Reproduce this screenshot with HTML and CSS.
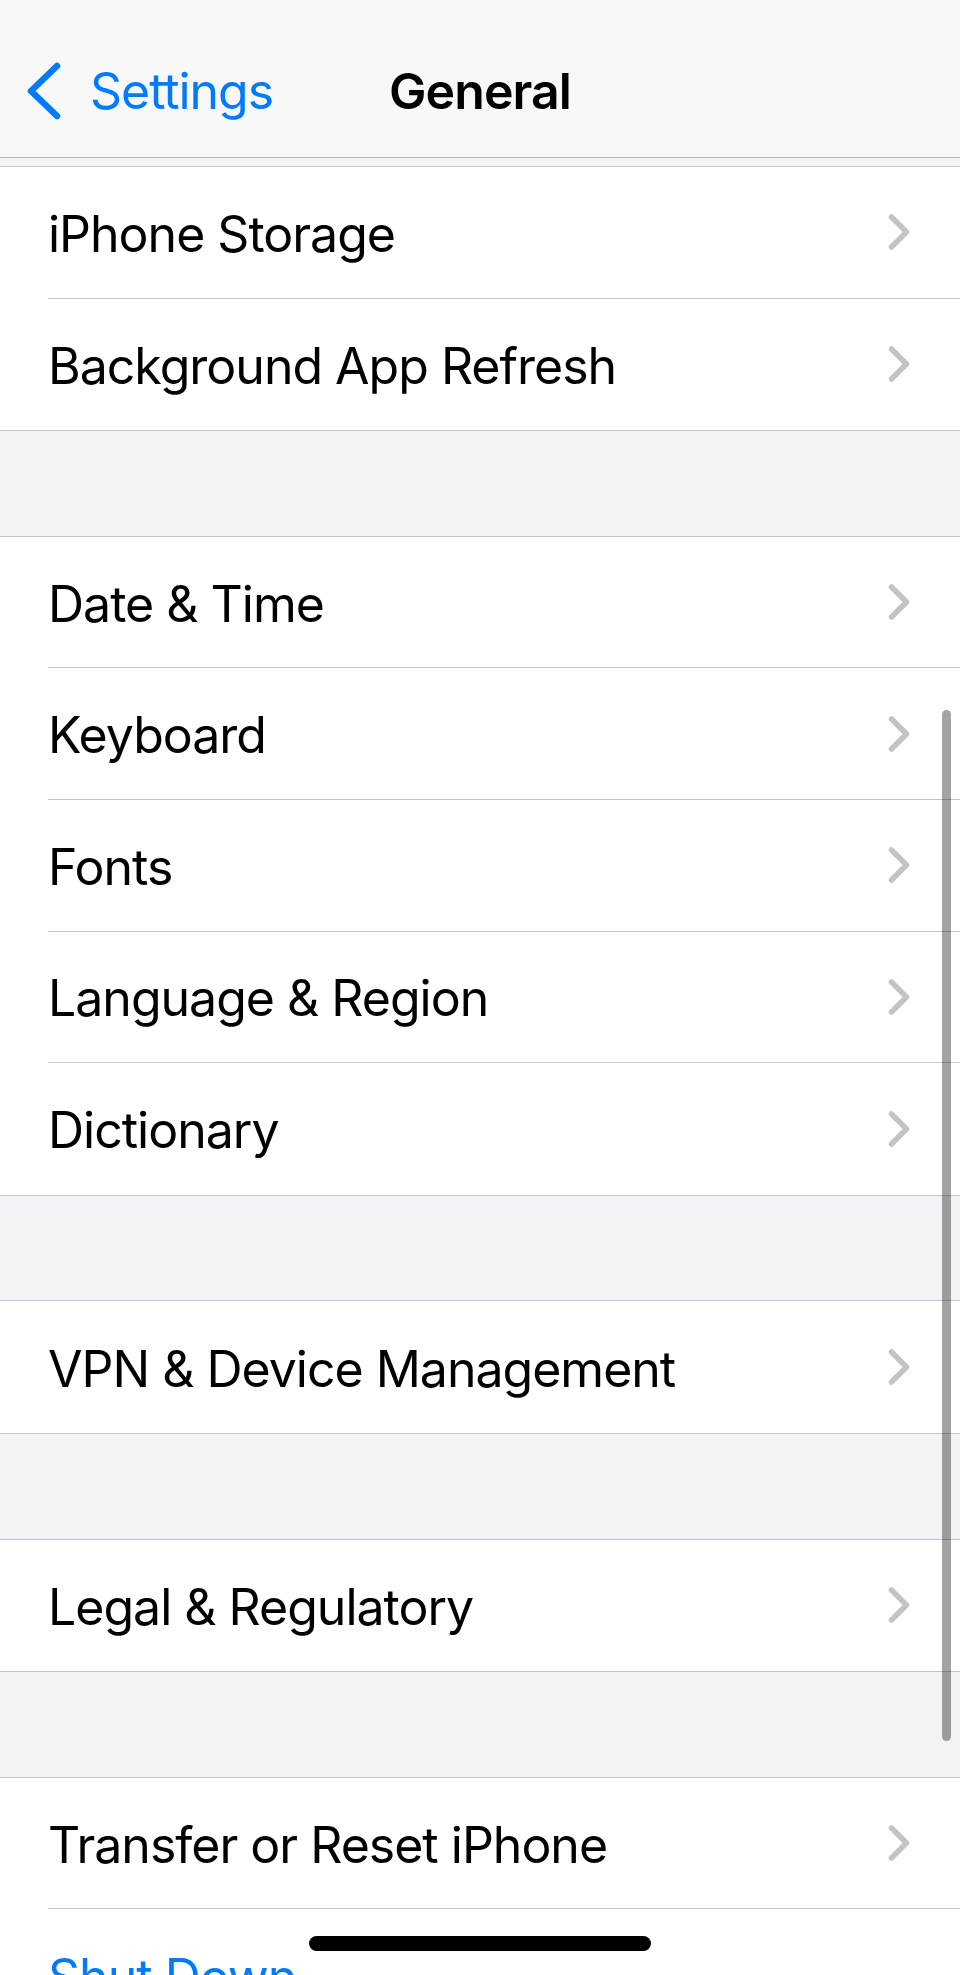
FILE: index.html
```html
<!DOCTYPE html>
<html lang="en">
<head>
<meta charset="utf-8">
<title>General</title>
<link rel="stylesheet" href="styles.css">
</head>
<body>
<div class="screen">
  <header class="navbar">
    <div class="nav-row">
      <a class="back">
        <svg class="back-chev" viewBox="0 0 36 58" width="36" height="58"><path d="M31 4 L5 29 L31 54"/></svg>
        <span class="back-label">Settings</span>
      </a>
      <h1 class="title">General</h1>
      <div class="nav-spacer"></div>
    </div>
  </header>
  <div class="top-gap"></div>

  <section class="group">
    <div class="row"><div class="row-inner"><span class="label">iPhone Storage</span><svg class="chev" viewBox="0 0 22 36"><path d="M3.5 3 L18.5 18 L3.5 33"/></svg></div></div>
    <div class="row"><div class="row-inner"><span class="label">Background App Refresh</span><svg class="chev" viewBox="0 0 22 36"><path d="M3.5 3 L18.5 18 L3.5 33"/></svg></div></div>
  </section>
  <div class="gap"></div>

  <section class="group">
    <div class="row"><div class="row-inner"><span class="label">Date &amp; Time</span><svg class="chev" viewBox="0 0 22 36"><path d="M3.5 3 L18.5 18 L3.5 33"/></svg></div></div>
    <div class="row"><div class="row-inner"><span class="label">Keyboard</span><svg class="chev" viewBox="0 0 22 36"><path d="M3.5 3 L18.5 18 L3.5 33"/></svg></div></div>
    <div class="row"><div class="row-inner"><span class="label">Fonts</span><svg class="chev" viewBox="0 0 22 36"><path d="M3.5 3 L18.5 18 L3.5 33"/></svg></div></div>
    <div class="row"><div class="row-inner"><span class="label">Language &amp; Region</span><svg class="chev" viewBox="0 0 22 36"><path d="M3.5 3 L18.5 18 L3.5 33"/></svg></div></div>
    <div class="row"><div class="row-inner"><span class="label">Dictionary</span><svg class="chev" viewBox="0 0 22 36"><path d="M3.5 3 L18.5 18 L3.5 33"/></svg></div></div>
  </section>
  <div class="gap"></div>

  <section class="group">
    <div class="row"><div class="row-inner"><span class="label">VPN &amp; Device Management</span><svg class="chev" viewBox="0 0 22 36"><path d="M3.5 3 L18.5 18 L3.5 33"/></svg></div></div>
  </section>
  <div class="gap"></div>

  <section class="group">
    <div class="row"><div class="row-inner"><span class="label">Legal &amp; Regulatory</span><svg class="chev" viewBox="0 0 22 36"><path d="M3.5 3 L18.5 18 L3.5 33"/></svg></div></div>
  </section>
  <div class="gap"></div>

  <section class="group">
    <div class="row"><div class="row-inner"><span class="label">Transfer or Reset iPhone</span><svg class="chev" viewBox="0 0 22 36"><path d="M3.5 3 L18.5 18 L3.5 33"/></svg></div></div>
    <div class="row"><div class="row-inner"><span class="label action">Shut Down</span></div></div>
  </section>

  <div class="scrollbar"></div>
  <div class="home-indicator"></div>
</div>
</body>
</html>
```

FILE: styles.css
```css
* { box-sizing: border-box; }
html, body { margin: 0; padding: 0; }
body {
  background: #f2f2f7;
  font-family: Inter, "Noto Sans", sans-serif;
  -webkit-font-smoothing: antialiased;
}
.screen {
  position: relative;
  width: 960px;
  height: 1975px;
  overflow: hidden;
  background: #f2f2f7;
}
.navbar {
  height: 158px;
  background: #f8f8f9;
  border-bottom: 1px solid #b4b4b6;
  padding-top: 26px;
}
.nav-row {
  height: 130px;
  display: grid;
  grid-template-columns: 1fr auto 1fr;
  align-items: center;
}
.back {
  display: flex;
  align-items: center;
  padding-left: 26px;
  color: #007aff;
}
.back-chev {
  fill: none;
  stroke: #007aff;
  stroke-width: 6.5;
  stroke-linecap: round;
  stroke-linejoin: round;
  margin-right: 28px;
}
.back-label {
  font-size: 50px;
  letter-spacing: -1.05px;
}
.title {
  margin: 0;
  font-size: 50px;
  font-weight: 600;
  letter-spacing: -0.9px;
  color: #000;
}
.top-gap { height: 8px; }
.gap { height: 104.6px; }
.group {
  background: #fff;
  border-top: 1px solid #c6c6c8;
  border-bottom: 1px solid #c6c6c8;
}
.row {
  padding-left: 48px;
  height: 131.6px;
}
.row-inner {
  height: 100%;
  display: flex;
  align-items: center;
  padding-right: 50px;
  border-bottom: 1px solid #c6c6c8;
}
.row:last-child .row-inner { border-bottom: none; }
.label {
  flex: 1;
  padding-top: 3px;
  font-size: 50px;
  letter-spacing: -1px;
  color: #000;
  white-space: nowrap;
}
.label.action { color: #007aff; }
.chev {
  width: 22px;
  height: 36px;
  fill: none;
  stroke: #c4c4c7;
  stroke-width: 5.5;
  stroke-linecap: round;
  stroke-linejoin: round;
}
.scrollbar {
  position: absolute;
  left: 942px;
  top: 710px;
  width: 9px;
  height: 1031px;
  border-radius: 5px;
  background: rgba(0, 0, 0, 0.36);
}
.home-indicator {
  position: absolute;
  left: 309px;
  top: 1936px;
  width: 342px;
  height: 15px;
  border-radius: 8px;
  background: #000;
}
```
